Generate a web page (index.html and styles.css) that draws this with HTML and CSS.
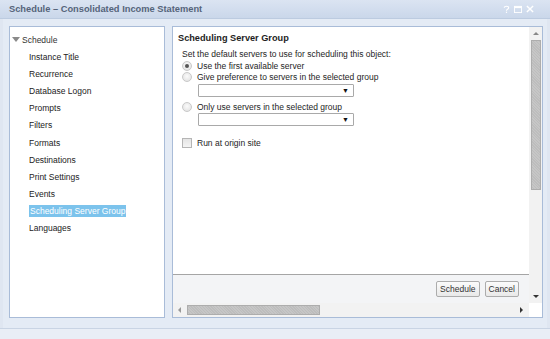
FILE: index.html
```html
<!DOCTYPE html>
<html>
<head>
<meta charset="utf-8">
<link rel="stylesheet" href="styles.css">
</head>
<body>
<div class="window">
  <div class="titlebar">
    <span class="title">Schedule – Consolidated Income Statement</span>
    <span class="tools">
      <svg width="7" height="9" viewBox="0 0 8 9"><path d="M1.5 2.5 Q1.5 0.8 4 0.8 Q6.5 0.8 6.5 2.6 Q6.5 3.8 4.8 4.5 Q4 4.9 4 6" fill="none" stroke="#fff" stroke-width="1.3"/><rect x="3.3" y="7" width="1.4" height="1.4" fill="#fff"/></svg>
      <svg width="8" height="8" viewBox="0 0 9 9"><rect x="0.5" y="1.5" width="8" height="7" fill="none" stroke="#fff" stroke-width="1"/><rect x="0.5" y="1.5" width="8" height="2" fill="#fff"/></svg>
      <svg width="8" height="8" viewBox="0 0 9 9"><path d="M1 1 L8 8 M8 1 L1 8" stroke="#fff" stroke-width="1.6"/></svg>
    </span>
  </div>
  <div class="main">
    <div class="tree">
      <div class="root"><span class="caret"></span>Schedule</div>
      <div class="item">Instance Title</div>
      <div class="item">Recurrence</div>
      <div class="item">Database Logon</div>
      <div class="item">Prompts</div>
      <div class="item">Filters</div>
      <div class="item">Formats</div>
      <div class="item">Destinations</div>
      <div class="item">Print Settings</div>
      <div class="item">Events</div>
      <div class="item"><span class="sel">Scheduling Server Group</span></div>
      <div class="item">Languages</div>
    </div>
    <div class="panel">
      <div class="panel-top">
        <div class="panel-left">
          <div class="content">
            <div class="heading">Scheduling Server Group</div>
            <div class="intro">Set the default servers to use for scheduling this object:</div>
            <div class="opt"><span class="radio checked"></span>Use the first available server</div>
            <div class="opt"><span class="radio"></span>Give preference to servers in the selected group</div>
            <div class="select"><span class="arrow">▼</span></div>
            <div class="opt opt-gap"><span class="radio"></span>Only use servers in the selected group</div>
            <div class="select select-2"><span class="arrow">▼</span></div>
            <div class="opt check-row"><span class="check"></span>Run at origin site</div>
          </div>
          <div class="buttons">
            <button class="btn">Schedule</button>
            <button class="btn">Cancel</button>
          </div>
        </div>
        <div class="vscroll">
          <div class="arr up"></div>
          <div class="vthumb"></div>
          <div class="vtrack"></div>
          <div class="arr down"></div>
        </div>
      </div>
      <div class="hscroll">
        <div class="harr left"></div>
        <div class="hthumb"></div>
        <div class="htrack"></div>
        <div class="harr right"></div>
      </div>
    </div>
  </div>
  <div class="status"></div>
</div>
</body>
</html>
```
FILE: styles.css
```css
* { box-sizing: border-box; }
html, body { margin: 0; padding: 0; }
body {
  width: 550px;
  height: 339px;
  overflow: hidden;
  font-family: "Liberation Sans", Arial, sans-serif;
  font-size: 8.5px;
  color: #1e1e1e;
  background: #e4ebf5;
}
.window {
  width: 550px;
  height: 339px;
  display: flex;
  flex-direction: column;
  border-left: 3px solid #dfe6f1;
  border-right: 3px solid #dfe6f1;
  background: #e4ebf5;
}
.titlebar {
  height: 19px;
  display: flex;
  align-items: center;
  justify-content: space-between;
  background: linear-gradient(#dbe4f2, #cad7ea);
  border-bottom: 1px solid #bccbe0;
  margin: 0 -3px;
  padding-left: 9px;
  padding-right: 16px;
}
.title {
  font-weight: bold;
  font-size: 9.3px;
  color: #55647a;
}
.tools { display: flex; gap: 4px; align-items: center; }
.main {
  display: flex;
  gap: 7px;
  padding: 7px 4px 0 6px;
  height: 300px;
}
.tree {
  width: 156px;
  height: 292px;
  background: #fff;
  border: 1px solid #a9bcd8;
  padding-top: 4px;
}
.root {
  height: 17px;
  display: flex;
  align-items: center;
  padding-left: 1px;
  color: #333;
}
.caret {
  width: 0; height: 0;
  border-left: 4px solid transparent;
  border-right: 4px solid transparent;
  border-top: 5px solid #8a8a8a;
  margin: 0 2px 0 1px;
}
.item {
  height: 17.2px;
  display: flex;
  align-items: center;
  padding-left: 19px;
  color: #222;
}
.sel {
  background: #7cc3ec;
  color: #fff;
  padding: 1px 1px;
}
.panel {
  width: 371px;
  height: 292px;
  border: 1px solid #a9bcd8;
  background: #fff;
  display: flex;
  flex-direction: column;
}
.panel-top { display: flex; flex: 1; }
.panel-left { flex: 1; display: flex; flex-direction: column; }
.content {
  flex: 1;
  padding: 2px 0 0 5px;
  border-bottom: 1px solid #a5a5a5;
}
.heading { font-weight: bold; font-size: 9.2px; height: 17px; display: flex; align-items: center; }
.intro { padding-left: 4px; margin-top: 3px; height: 11px; line-height: 11px; }
.opt {
  display: flex;
  align-items: center;
  height: 11.5px;
  padding-left: 4px;
}
.opt-gap { margin-top: 1px; }
.radio {
  width: 10px; height: 10px;
  border-radius: 50%;
  border: 1px solid #c9c9c9;
  background: radial-gradient(circle at 50% 40%, #fbfbfb, #dedede);
  margin-right: 5px;
  position: relative;
}
.radio.checked::after {
  content: "";
  position: absolute;
  left: 2px; top: 2px;
  width: 4px; height: 4px;
  border-radius: 50%;
  background: #555;
}
.select {
  width: 156px;
  height: 13px;
  margin: 1px 0 4px 20px;
  border: 1px solid #a9a9a9;
  border-radius: 1px;
  background: #fff;
  display: flex;
  justify-content: flex-end;
  align-items: center;
  padding-right: 4px;
}
.select-2 { margin-top: 0; }
.arrow { font-size: 7px; color: #111; }
.check-row { margin-top: 12px; }
.check {
  width: 10px; height: 10px;
  border: 1px solid #b5b5b5;
  background: linear-gradient(#e4e4e4, #f4f4f4);
  margin-right: 5px;
}
.buttons {
  height: 28px;
  background: #f3f4f6;
  display: flex;
  justify-content: flex-end;
  align-items: center;
  gap: 5px;
  padding-right: 10px;
}
.btn {
  font-family: inherit;
  font-size: 8.5px;
  color: #333;
  height: 16px;
  padding: 0 3px;
  border: 1px solid #acacac;
  border-radius: 2px;
  background: linear-gradient(#fbfbfb, #e9e9e9);
}
.vscroll {
  width: 13px;
  background: #f2f2f2;
  display: flex;
  flex-direction: column;
  align-items: center;
}
.arr { width: 0; height: 0; border-left: 3px solid transparent; border-right: 3px solid transparent; }
.arr.up { border-bottom: 3px solid #888; margin: 5px 0 5px; }
.arr.down { border-top: 3px solid #333; margin: 5px 0 5px; }
.vthumb {
  width: 10px;
  height: 150px;
  background: repeating-linear-gradient(45deg, #c6c6c6 0 1px, #bdbdbd 1px 2px);
  border: 1px solid #adadad;
}
.vtrack { flex: 1; }
.hscroll {
  height: 14px;
  background: #f2f2f2;
  display: flex;
  align-items: center;
  margin-right: 13px;
}
.harr { width: 0; height: 0; border-top: 3px solid transparent; border-bottom: 3px solid transparent; }
.harr.left { border-right: 3px solid #999; margin: 0 6px 0 5px; }
.harr.right { border-left: 3px solid #333; margin: 0 6px 0 5px; }
.hthumb {
  width: 133px;
  height: 10px;
  background: repeating-linear-gradient(45deg, #c6c6c6 0 1px, #bdbdbd 1px 2px);
  border: 1px solid #adadad;
}
.htrack { flex: 1; }
.status {
  flex: 1;
  margin: 9px -3px 0;
  border-top: 1px solid #c9d4e4;
  background: #e9eef6;
}
```
